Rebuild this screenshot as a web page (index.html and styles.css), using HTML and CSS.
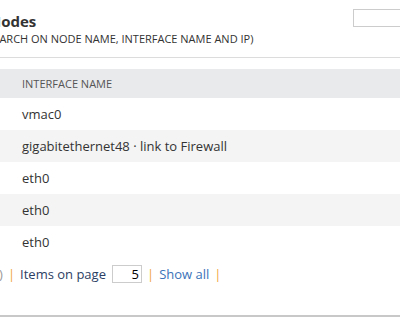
FILE: index.html
```html
<!DOCTYPE html>
<html>
<head>
<meta charset="utf-8">
<link rel="stylesheet" href="styles.css">
</head>
<body>
<div class="page">
  <header class="head">
    <div class="titles">
      <h2 class="title">Nodes</h2>
      <div class="subtitle">(SEARCH ON NODE NAME, INTERFACE NAME AND IP)</div>
    </div>
    <input class="search" type="text">
  </header>
  <div class="table">
    <div class="row hdr"><span class="cell">INTERFACE NAME</span></div>
    <div class="row"><span class="cell">vmac0</span></div>
    <div class="row alt"><span class="cell">gigabitethernet48 · link to Firewall</span></div>
    <div class="row"><span class="cell">eth0</span></div>
    <div class="row alt"><span class="cell">eth0</span></div>
    <div class="row"><span class="cell">eth0</span></div>
  </div>
  <div class="pager">
    <span class="cut">(1 of 10)</span>
    <span class="sep">|</span>
    <span class="label">Items on page</span>
    <input class="per" type="text" value="5">
    <span class="sep">|</span>
    <a class="link">Show all</a>
    <span class="sep">|</span>
  </div>
</div>
</body>
</html>
```

FILE: styles.css
```css
html, body {
  margin: 0;
  padding: 0;
  background: #fff;
  overflow: hidden;
}
.page {
  width: 400px;
  height: 317px;
  box-sizing: border-box;
  border-bottom: 2px solid #c8c8c8;
  font-family: "Open Sans", sans-serif;
  color: #333;
  overflow: hidden;
}
.head {
  height: 58px;
  box-sizing: border-box;
  border-bottom: 1px solid #dcdcdc;
  display: flex;
  justify-content: space-between;
  align-items: flex-start;
}
.titles {
  padding-top: 10px;
}
.title {
  margin: 0 0 0 -11px;
  font-size: 15px;
  font-weight: 700;
  line-height: 22px;
  color: #333;
}
.subtitle {
  margin-left: -16px;
  font-size: 11px;
  line-height: 14px;
  color: #333;
  white-space: nowrap;
}
.search {
  margin-top: 9px;
  width: 60px;
  height: 18px;
  box-sizing: border-box;
  border: 1px solid #ccc;
  margin-right: -13px;
  padding: 0;
}
.table {
  margin-top: 11px;
}
.row {
  height: 32px;
  display: flex;
  align-items: center;
  padding-left: 22px;
  font-size: 13px;
  color: #333;
}
.row.hdr {
  height: 29px;
  background: #e9eaec;
  font-size: 11px;
  color: #555;
}
.row.alt {
  background: #f4f4f4;
}
.pager {
  display: flex;
  align-items: center;
  margin-top: 6px;
  margin-left: -46px;
  font-size: 13px;
  height: 20px;
  white-space: nowrap;
}
.cut {
  color: #999;
}
.sep {
  color: #f0a33c;
  margin: 0 5px;
}
.label {
  color: #2c3e64;
}
.per {
  width: 30px;
  height: 18px;
  box-sizing: border-box;
  border: 1px solid #ccc;
  margin-left: 6px;
  padding: 0 2px 0 0;
  text-align: right;
  font-family: "Open Sans", sans-serif;
  font-size: 13px;
  color: #000;
}
.link {
  color: #3b73b9;
}
```
